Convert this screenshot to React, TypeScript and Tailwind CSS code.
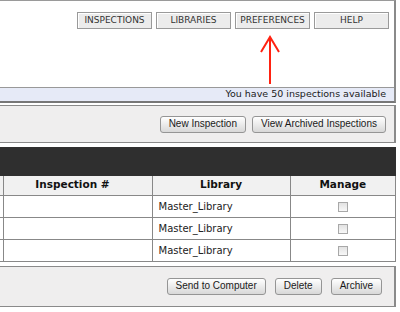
const verdana = { fontFamily: '"DejaVu Sans", Verdana, sans-serif' };
const arial = { fontFamily: '"Liberation Sans", Arial, sans-serif' };

const navItems = ['INSPECTIONS', 'LIBRARIES', 'PREFERENCES', 'HELP'];

function NavButton({ label }: { label: string }) {
  return (
    <button
      type="button"
      className="h-[17px] w-[75px] border border-[#9a9a9a] bg-[#ececec] text-[9px] leading-none text-[#333] shadow-[inset_1px_1px_0_#fff]"
      style={verdana}
    >
      {label}
    </button>
  );
}

function Btn({ label, className = '' }: { label: string; className?: string }) {
  return (
    <button
      type="button"
      className={`h-[17px] rounded-[3px] border border-[#959595] bg-gradient-to-b from-white to-[#d8d8d8] px-[8px] text-[10px] leading-none text-[#1a1a1a] ${className}`}
      style={arial}
    >
      {label}
    </button>
  );
}

function Checkbox() {
  return (
    <span className="inline-block h-[10px] w-[10px] border border-[#a8a8a8] bg-gradient-to-b from-[#e2e2e2] to-[#f8f8f8] align-middle" />
  );
}

const rows = ['Master_Library', 'Master_Library', 'Master_Library'];

export default function App() {
  return (
    <div className="relative h-[312px] w-[400px] overflow-hidden bg-white">
      {/* top panel */}
      <div className="w-[396px] border-t border-r-2 border-b-2 border-t-[#9a9a9a] border-r-[#8a8a8a] border-b-[#777]">
        <div className="flex h-[86px] justify-end gap-[4px] pt-[11px] pr-[5px]">
          {navItems.map((n) => (
            <NavButton key={n} label={n} />
          ))}
        </div>
        <div
          className="flex h-[14px] items-center justify-end border-t border-[#999] bg-[#e6eaf7] pr-[8px] text-[9.5px] text-[#1a1a1a]"
          style={verdana}
        >
          You have 50 inspections available
        </div>
      </div>

      {/* actions panel */}
      <div className="mt-[2px] flex h-[38px] w-[396px] items-center justify-end gap-[6px] border-y border-r-2 border-[#8a8a8a] bg-[#efeeee] pr-[8px]">
        <Btn label="New Inspection" />
        <Btn label="View Archived Inspections" />
      </div>

      {/* table */}
      <div className="mt-[4px] h-[29px] w-[396px] bg-[#2f2f2f]" />
      <table className="w-[396px] table-fixed border-collapse" style={verdana}>
        <colgroup>
          <col className="w-[3px]" />
          <col className="w-[149px]" />
          <col className="w-[138px]" />
          <col />
        </colgroup>
        <thead>
          <tr className="h-[19px] bg-[#f1f1f1] text-[10.5px] font-bold text-[#111]">
            <th className="border border-t-0 border-[#888] border-l-0 p-0" />
            <th className="border border-t-0 border-[#888] p-0 pr-[10px] text-center">Inspection #</th>
            <th className="border border-t-0 border-[#888] p-0 text-center">Library</th>
            <th className="border border-t-0 border-[#888] p-0 text-center">Manage</th>
          </tr>
        </thead>
        <tbody>
          {rows.map((r, i) => (
            <tr key={i} className="h-[22px] text-[10px] text-[#222]">
              <td className="border border-[#888] border-l-0 p-0" />
              <td className="border border-[#888] p-0" />
              <td className="border border-[#888] p-0 pl-[6px]">{r}</td>
              <td className="border border-[#888] p-0 text-center">
                <Checkbox />
              </td>
            </tr>
          ))}
        </tbody>
      </table>

      {/* bottom panel */}
      <div className="mt-[4px] flex h-[41px] w-[396px] items-center justify-end gap-[9px] border-y border-r-2 border-[#8a8a8a] bg-[#efeeee] pr-[12px]">
        <Btn label="Send to Computer" />
        <Btn label="Delete" />
        <Btn label="Archive" />
      </div>

      {/* annotation arrow */}
      <svg className="absolute left-[255px] top-[30px]" width="30" height="58" viewBox="0 0 30 58">
        <path d="M15 7 L15 54" stroke="#f21" strokeWidth="2" fill="none" />
        <path d="M6 22 L15 7 L24 22" stroke="#f21" strokeWidth="2" fill="none" />
      </svg>
    </div>
  );
}
